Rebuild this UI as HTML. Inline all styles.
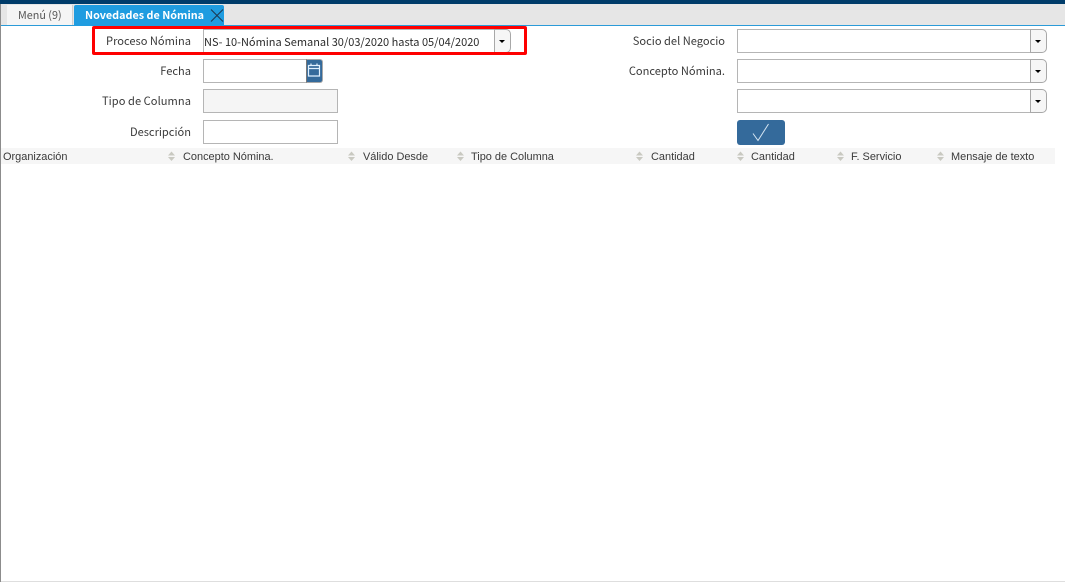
<!DOCTYPE html>
<html>
<head>
<meta charset="utf-8">
<style>
html,body{margin:0;padding:0;background:#fff;}
body{width:1065px;height:582px;position:relative;overflow:hidden;font-family:"Noto Sans CJK JP",sans-serif;}
div,span{position:absolute;box-sizing:border-box;}
.l{font-size:11.1px;color:#3a3a3a;white-space:nowrap;text-align:right;line-height:16px;height:16px;}
.i{background:#fff;border:1px solid #b5b5b5;}
.b{background:#f6f6f6;border:1px solid #a8a8a8;border-radius:0 5px 5px 0;width:17px;height:24px;}
.b:after{content:"";position:absolute;left:3.5px;top:10px;border-left:3.5px solid transparent;border-right:3.5px solid transparent;border-top:3.5px solid #000;}
.h{font-family:"Liberation Sans",sans-serif;font-size:10.95px;color:#3a3a3a;top:149px;line-height:16px;height:16px;white-space:nowrap;}
.s{top:151px;width:9px;height:11px;}
</style>
</head>
<body>
<div style="left:0;top:0;width:1065px;height:4px;background:#003c6a"></div>
<div style="left:0;top:4px;width:1065px;height:21px;background:#e6e6e6"></div>
<div style="left:0;top:25px;width:1065px;height:1px;background:#2b9bd8"></div>
<div style="left:0;top:4px;width:1px;height:578px;background:#8c8c8c"></div>
<div style="left:1px;top:581px;width:1064px;height:1px;background:#dedede"></div>

<div style="left:7px;top:5px;width:66px;height:20px;background:#f5f5f5;border-right:1px solid #d0d0d0"></div>
<div style="left:18px;top:8px;font-size:10.8px;line-height:15px;color:#555;white-space:nowrap">Menú (9)</div>
<div style="left:74px;top:5px;width:150px;height:21px;background:#1f9ce0;border-radius:2px 2px 0 0"></div>
<div style="left:85px;top:8px;font-size:10.8px;font-weight:bold;line-height:15px;color:#fff;white-space:nowrap">Novedades de Nómina</div>
<svg style="position:absolute;left:210px;top:8px" width="14" height="15" viewBox="0 0 14 15"><path d="M1 1.500L13 13.500M13 1.500L1 13.500" stroke="#1c3a55" stroke-width="1.100" fill="none"/></svg>

<!-- Proceso -->
<div class="l" style="left:60px;top:33px;width:131px">Proceso Nómina</div>
<div class="i" style="left:203px;top:29px;width:292px;height:24px"></div>
<div style="left:204px;top:35px;font-size:11px;line-height:15px;color:#2a2a2a;white-space:nowrap">NS- 10-Nómina Semanal 30/03/2020 hasta 05/04/2020</div>
<div class="b" style="left:494px;top:29px"></div>
<div style="left:92px;top:26px;width:435px;height:29px;border:3px solid #fe0000;border-radius:2px"></div>

<!-- Fecha -->
<div class="l" style="left:60px;top:63px;width:131px">Fecha</div>
<div class="i" style="left:203px;top:59px;width:104px;height:24px"></div>
<div style="left:306px;top:59px;width:17px;height:24px;background:#346a9b;border:1px solid #a8a8a8;border-left:1px solid #777;border-radius:0 3px 3px 0"></div>
<svg style="position:absolute;left:307px;top:63px" width="14" height="15" viewBox="0 0 14 15"><path d="M1.500 2.500H12.500V13H1.500ZM1.500 5.500H12.500M4 0.500V3M10 0.500V3" stroke="#dff0ff" stroke-width="1.200" fill="none"/></svg>

<!-- Tipo -->
<div class="l" style="left:60px;top:93px;width:131px;letter-spacing:.05px">Tipo de Columna</div>
<div class="i" style="left:203px;top:89px;width:135px;height:24px;background:#f5f5f5"></div>

<!-- Descripcion -->
<div class="l" style="left:60px;top:124px;width:131px">Descripción</div>
<div class="i" style="left:203px;top:120px;width:135px;height:24px"></div>

<!-- Right side -->
<div class="l" style="left:594px;top:33px;width:131px">Socio del Negocio</div>
<div class="i" style="left:737px;top:29px;width:294px;height:24px"></div>
<div class="b" style="left:1030px;top:29px"></div>
<div class="l" style="left:594px;top:63px;width:131px">Concepto Nómina.</div>
<div class="i" style="left:737px;top:59px;width:294px;height:24px"></div>
<div class="b" style="left:1030px;top:59px"></div>
<div class="i" style="left:737px;top:89px;width:294px;height:24px"></div>
<div class="b" style="left:1030px;top:89px"></div>

<div style="left:737px;top:120px;width:48px;height:25px;background:#346a9b;border-radius:3px"></div>
<svg style="position:absolute;left:752px;top:123px" width="18" height="19" viewBox="0 0 18 19"><path d="M1 10.500L6 17.500L16.500 1" stroke="#d4e4f1" stroke-width="1" fill="none"/></svg>

<!-- Grid header -->
<div style="left:1px;top:148px;width:1054px;height:16px;background:#f6f6f6"></div>
<div class="h" style="left:3px">Organización</div>
<div class="h" style="left:183px">Concepto Nómina.</div>
<div class="h" style="left:363px">Válido Desde</div>
<div class="h" style="left:471px">Tipo de Columna</div>
<div class="h" style="left:651px">Cantidad</div>
<div class="h" style="left:751px">Cantidad</div>
<div class="h" style="left:851px">F. Servicio</div>
<div class="h" style="left:951px">Mensaje de texto</div>

<svg class="s" style="position:absolute;left:167px" viewBox="0 0 9 11"><path d="M4.500 0.500L8 4.500H1ZM1 6H8L4.500 10Z" fill="#c9c9c1"/></svg>
<svg class="s" style="position:absolute;left:347px" viewBox="0 0 9 11"><path d="M4.500 0.500L8 4.500H1ZM1 6H8L4.500 10Z" fill="#c9c9c1"/></svg>
<svg class="s" style="position:absolute;left:456px" viewBox="0 0 9 11"><path d="M4.500 0.500L8 4.500H1ZM1 6H8L4.500 10Z" fill="#c9c9c1"/></svg>
<svg class="s" style="position:absolute;left:635px" viewBox="0 0 9 11"><path d="M4.500 0.500L8 4.500H1ZM1 6H8L4.500 10Z" fill="#c9c9c1"/></svg>
<svg class="s" style="position:absolute;left:736px" viewBox="0 0 9 11"><path d="M4.500 0.500L8 4.500H1ZM1 6H8L4.500 10Z" fill="#c9c9c1"/></svg>
<svg class="s" style="position:absolute;left:836px" viewBox="0 0 9 11"><path d="M4.500 0.500L8 4.500H1ZM1 6H8L4.500 10Z" fill="#c9c9c1"/></svg>
<svg class="s" style="position:absolute;left:936px" viewBox="0 0 9 11"><path d="M4.500 0.500L8 4.500H1ZM1 6H8L4.500 10Z" fill="#c9c9c1"/></svg>
</body>
</html>
